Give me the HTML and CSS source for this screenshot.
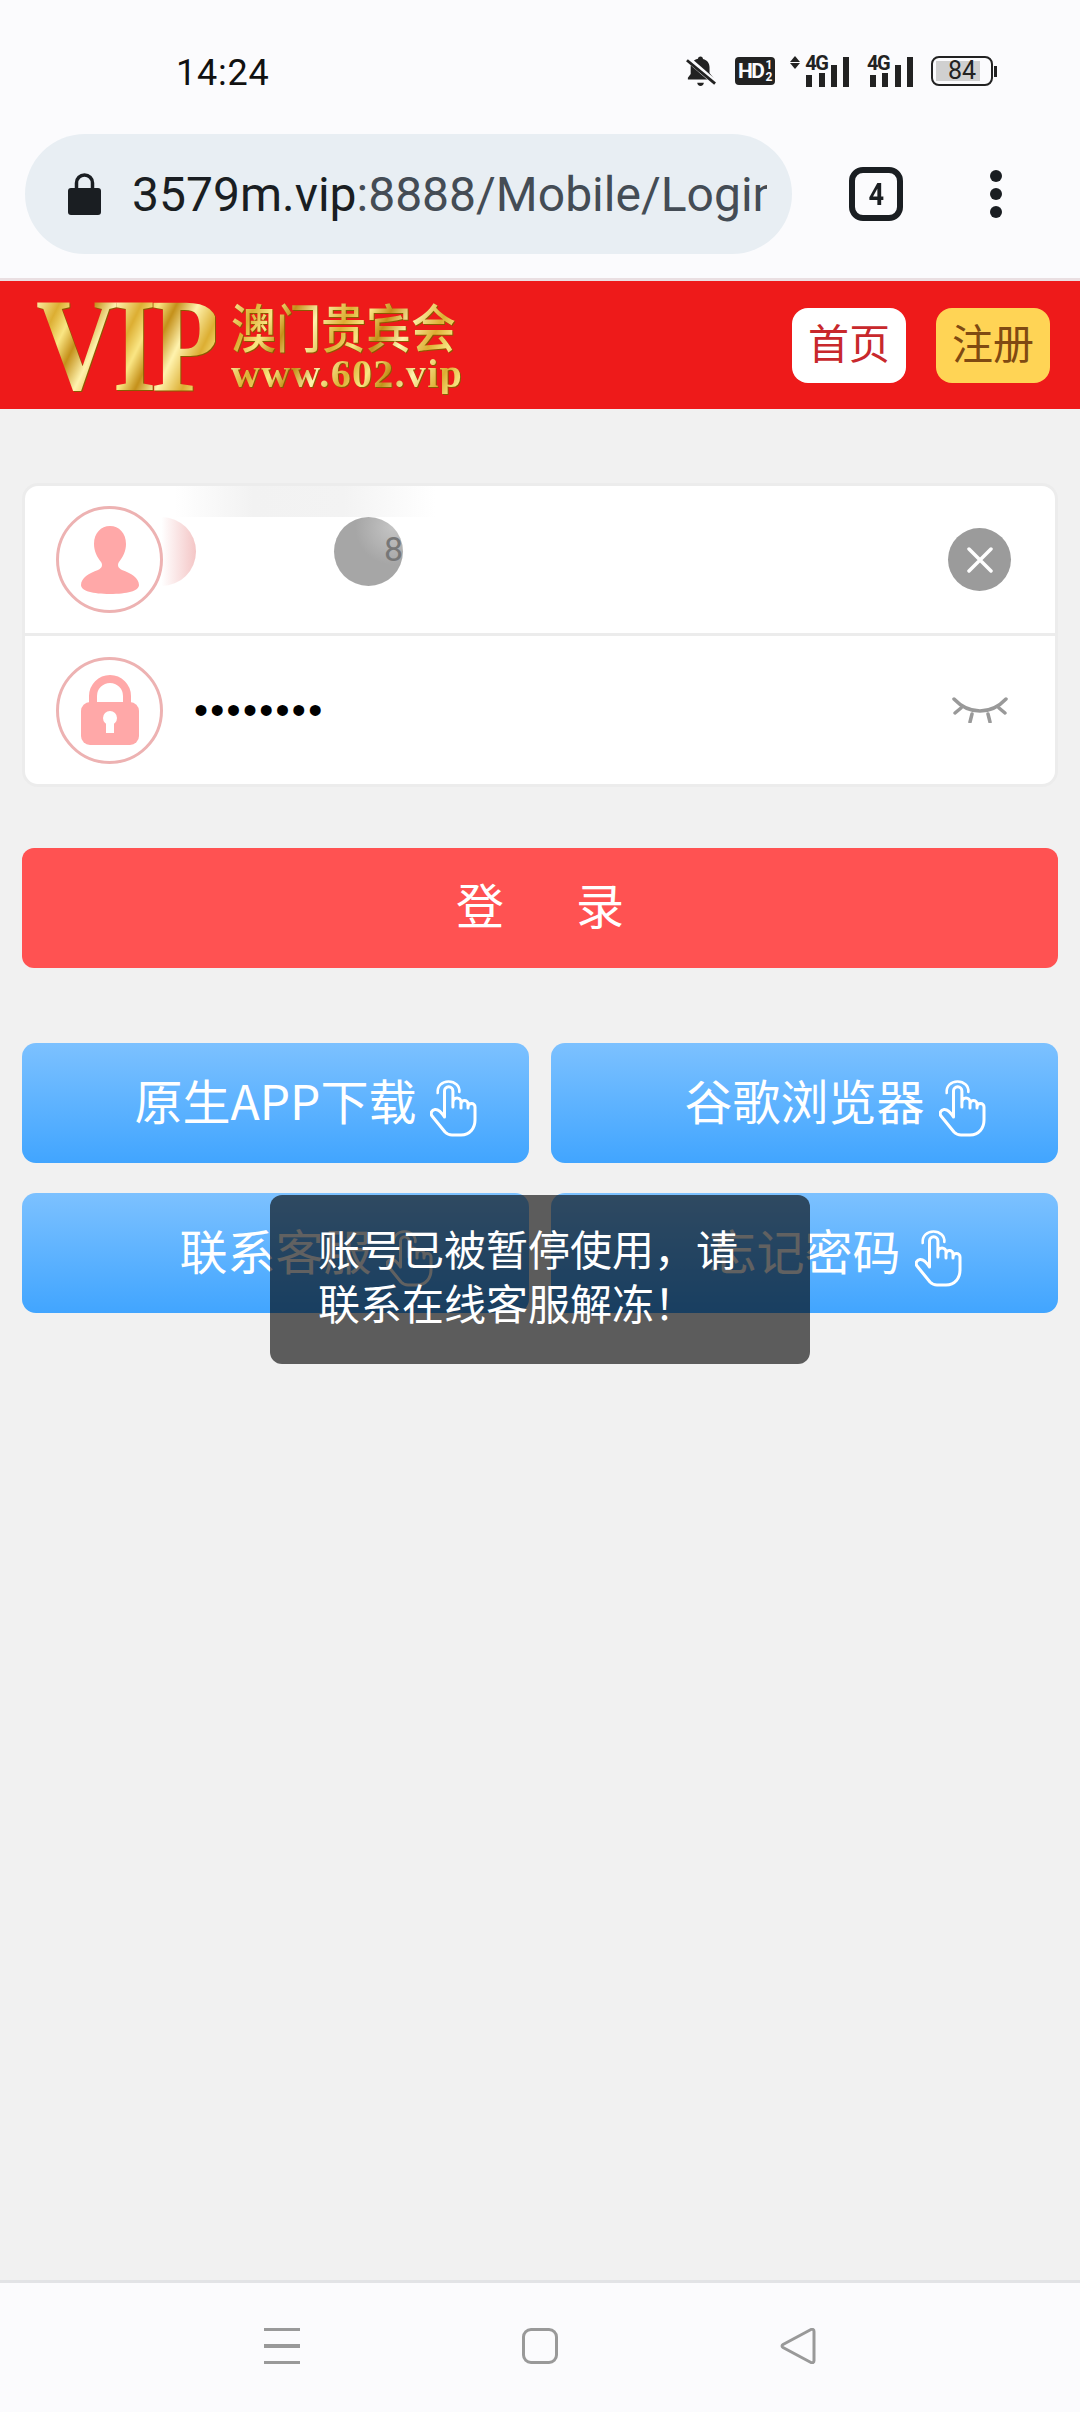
FILE: index.html
```html
<!DOCTYPE html>
<html lang="zh-CN">
<head>
  <meta charset="UTF-8" />
  <title>登录</title>
  <link rel="stylesheet" href="styles.css">
</head>
<body>
  <div class="phone">
    <div class="status-bar">
      <span class="time">14:24</span>
      <div class="status-icons">
        <svg class="ic-bell" width="30" height="33" viewBox="0 0 32 34">
          <path d="M15.500 1c1.600 0 2.600 1 2.600 2.600 4.600 1 7 4.600 7 9v6l4 5v2H2v-2l3-4v-7c0-4.400 2.400-8 7.800-9.200C12.800 2 13.900 1 15.500 1z" fill="#222"/>
          <path d="M12 29h7c0 2-1.500 3.500-3.500 3.500S12 31 12 29z" fill="#222"/>
          <path d="M0 2l31 27" stroke="#fbfbfd" stroke-width="6"/>
          <path d="M1 5l30 25" stroke="#222" stroke-width="3"/>
        </svg>
        <div class="hd-badge"><span class="hd-text">HD</span><span class="hd-nums"><span>1</span><span>2</span></span></div>
        <div class="signal">
          <span class="arrows"><i class="up"></i><i class="down"></i></span>
          <span class="net">4G</span>
          <span class="bars"><i class="b1"></i><i class="b2"></i><i class="b3"></i><i class="b4"></i></span>
        </div>
        <div class="signal signal-plain">
          <span class="net">4G</span>
          <span class="bars"><i class="b1"></i><i class="b2"></i><i class="b3"></i><i class="b4"></i></span>
        </div>
        <div class="battery">
          <div class="battery-body"><div class="battery-level"></div><span class="battery-num">84</span></div>
          <div class="battery-tip"></div>
        </div>
      </div>
    </div>

    <div class="url-bar">
      <div class="url-pill">
        <svg class="url-lock" width="33" height="42" viewBox="0 0 33 42">
          <path d="M8.500 17v-7a8 8 0 0 1 16 0v7" fill="none" stroke="#1a1e22" stroke-width="3.500"/>
          <rect y="15" width="33" height="27" rx="3" fill="#1a1e22"/>
        </svg>
        <div class="url-text"><span class="host">3579m.vip</span>:8888/Mobile/Login</div>
      </div>
      <div class="tab-count"><span>4</span></div>
      <div class="kebab"><i></i><i></i><i></i></div>
    </div>

    <header class="site-header">
      <div class="logo">
        <span class="logo-vip"><span class="logo-vip-text">VIP</span></span>
        <div class="logo-right">
          <span class="logo-cn">澳门贵宾会</span>
          <span class="logo-url">www.602.vip</span>
        </div>
      </div>
      <div class="header-btns">
        <a class="hbtn hbtn-home">首页</a>
        <a class="hbtn hbtn-reg">注册</a>
      </div>
    </header>

    <main class="content">
      <div class="login-card">
        <div class="login-row row-user">
          <div class="row-icon">
            <svg width="58" height="68" viewBox="0 0 58 68">
              <path d="M29 0c9 0 16 7 16 18 0 7-3 13-7 18-2 3-1 6 3 8 9 3 17 8 17 15 0 6-12 9-29 9S0 65 0 59c0-7 8-12 17-15 4-2 5-5 3-8-4-5-7-11-7-18C13 7 20 0 29 0z" fill="#ffa8a8"/>
            </svg>
          </div>
          <span class="clear-btn">
            <svg width="26" height="26" viewBox="0 0 26 26"><path d="M2 2l22 22M24 2L2 24" stroke="#fff" stroke-width="3.500" stroke-linecap="round"/></svg>
          </span>
          <div class="blur-top"></div>
          <div class="blur-pink"></div>
          <div class="blur-grey"><span class="blur-char">8</span></div>
        </div>
        <div class="login-row">
          <div class="row-icon">
            <svg width="58" height="70" viewBox="0 0 58 70">
              <path d="M12 30V21a17 17 0 0 1 34 0v9" fill="none" stroke="#ffa8a8" stroke-width="8"/>
              <rect y="27" width="58" height="43" rx="9" fill="#ffa8a8"/>
              <circle cx="29" cy="43" r="7" fill="#fff"/>
              <rect x="25" y="44" width="8" height="14" fill="#fff"/>
            </svg>
          </div>
          <span class="pass-dots">••••••••</span>
          <svg class="eye" width="56" height="26" viewBox="0 0 56 26">
            <path d="M2 2c15 16 37 16 52 0M9 11l-6 5M20 17l-2 8M36 17l2 8M47 11l6 5" fill="none" stroke="#999" stroke-width="3.500" stroke-linecap="round"/>
          </svg>
        </div>
      </div>

      <a class="login-btn">登&emsp;&ensp;录</a>

      <div class="link-grid">
        <a class="link-btn">原生APP下载<svg class="hand"><use href="#hand"/></svg></a>
        <a class="link-btn">谷歌浏览器<svg class="hand"><use href="#hand"/></svg></a>
        <a class="link-btn">联系客服<svg class="hand"><use href="#hand"/></svg></a>
        <a class="link-btn">忘记密码<svg class="hand"><use href="#hand"/></svg></a>
      </div>

      <div class="toast">账号已被暂停使用，请联系在线客服解冻！</div>
    </main>

    <nav class="nav-bar">
      <div class="nav-menu"><i></i><i></i><i></i></div>
      <div class="nav-home"></div>
      <svg class="nav-back" width="36" height="36" viewBox="0 0 36 36">
        <path d="M3 16.500L31 1.500c1.500-.8 3 .2 3 2v29c0 1.800-1.500 2.800-3 2L3 19.500c-1.300-.8-1.300-2.200 0-3z" fill="none" stroke="#999" stroke-width="3"/>
      </svg>
    </nav>
  </div>

  <svg width="0" height="0" class="defs">
    <symbol id="hand" viewBox="0 0 48 57">
      <path d="M14.500 37V11a4.200 4.200 0 0 1 8.400 0V27M23 22a4 4 0 0 1 8 0v6M31 24a3.500 3.500 0 0 1 7 0v4M38 27a3.500 3.500 0 0 1 7 0V40c0 8-5 15-14 15H22c-3 0-5-1-7-3L2 36c-2-3 0-6 3-6.500 3-.5 6 2 9.500 7.500"
        fill="none" stroke="#fff" stroke-width="3" stroke-linecap="round" stroke-linejoin="round"/>
      <path d="M7.700 13C7 6 12 1.500 18.500 1.500S30 6 29.300 12" fill="none" stroke="#fff" stroke-width="2.600" stroke-linecap="round"/>
    </symbol>
  </svg>
</body>
</html>
```

FILE: styles.css
```css
* {
  box-sizing: border-box;
}

body {
  margin: 0;
  background: #f1f1f1;
  font-family: 'Noto Sans CJK SC', 'Noto Sans', sans-serif;
}

.defs {
  position: absolute;
}

.phone {
  width: 1080px;
  height: 2412px;
  display: flex;
  flex-direction: column;
  overflow: hidden;
}

/* status bar */
.status-bar {
  height: 128px;
  padding: 50px 83px 32px 176px;
  background: #fbfbfd;
  display: flex;
  align-items: center;
  justify-content: space-between;
}

.time {
  font-family: Roboto, sans-serif;
  font-size: 36px;
  color: #111;
  letter-spacing: 0.8px;
}

.status-icons {
  display: flex;
  align-items: center;
  margin-bottom: 4px;
  gap: 18px;
  color: #222;
}

.ic-bell {
  margin-right: 1px;
}

.hd-badge {
  width: 40px;
  height: 28px;
  margin-right: -3px;
  border-radius: 4px;
  background: #222;
  color: #fbfbfd;
  display: flex;
  align-items: center;
  justify-content: center;
  font-family: Roboto, sans-serif;
  font-weight: 700;
}

.hd-text {
  font-size: 21px;
  letter-spacing: -1.5px;
}

.hd-nums {
  display: flex;
  flex-direction: column;
  font-size: 12px;
  line-height: 12px;
  margin-left: 2px;
}

.signal {
  display: flex;
  height: 31px;
  align-items: flex-end;
}

.arrows {
  display: flex;
  flex-direction: column;
  gap: 1px;
  align-self: flex-start;
  margin-right: 5px;
}

.arrows i {
  width: 0;
  height: 0;
  border-left: 5px solid transparent;
  border-right: 5px solid transparent;
}

.arrows .up {
  border-bottom: 6px solid #222;
}

.arrows .down {
  border-top: 6px solid #222;
}

.net {
  align-self: flex-start;
  width: 20px;
  margin-right: -19px;
  font-family: Roboto, sans-serif;
  font-size: 20px;
  font-weight: 700;
  line-height: 15px;
  letter-spacing: -1.5px;
}

.signal-plain .net {
  margin-right: -17px;
}

.bars {
  display: flex;
  align-items: flex-end;
  gap: 6.300px;
}

.bars i {
  display: block;
  width: 6px;
  background: #222;
}

.bars .b1 { height: 12px; }
.bars .b2 { height: 14px; }
.bars .b3 { height: 22px; }
.bars .b4 { height: 30px; }

.battery {
  display: flex;
  align-items: center;
  gap: 1px;
}

.battery-body {
  position: relative;
  width: 62px;
  height: 30px;
  border: 2px solid #222;
  border-radius: 8px;
  padding: 3px;
}

.battery-level {
  width: 44px;
  height: 100%;
  background: #d0d0d0;
}

.battery-num {
  position: absolute;
  inset: 0;
  text-align: center;
  font-family: Roboto, sans-serif;
  font-size: 25px;
  line-height: 26px;
  color: #222;
}

.battery-tip {
  width: 3px;
  height: 11px;
  background: #222;
}

/* browser url bar */
.url-bar {
  height: 150px;
  padding: 6px 0 0 25px;
  background: #fbfbfd;
  display: flex;
  align-items: flex-start;
}

.url-pill {
  width: 767px;
  height: 120px;
  border-radius: 60px;
  background: #e8eef3;
  padding: 0 25px 0 43px;
  display: flex;
  align-items: center;
  gap: 31px;
}

.url-lock {
  flex: none;
}

.url-text {
  min-width: 0;
  font-family: Roboto, sans-serif;
  font-size: 48px;
  color: #444c55;
  white-space: nowrap;
  overflow: hidden;
}

.host {
  color: #1a1e22;
}

.tab-count {
  width: 54px;
  height: 54px;
  margin: 33px 0 0 57px;
  border: 6px solid #1a1e22;
  border-radius: 14px;
  display: flex;
  align-items: center;
  justify-content: center;
  font-family: Roboto, sans-serif;
  font-size: 32px;
  font-weight: 700;
  color: #1a1e22;
}

.tab-count span {
  transform: scaleX(0.85);
}

.kebab {
  margin: 36px 0 0 87px;
  display: flex;
  flex-direction: column;
  gap: 6px;
}

.kebab i {
  display: block;
  width: 12px;
  height: 12px;
  border-radius: 50%;
  background: #1a1e22;
}

/* site header */
.site-header {
  height: 131px;
  padding: 0 30px 0 36px;
  border-top: 3px solid #eadfe2;
  background: #ee1a1a;
  display: flex;
  align-items: center;
  justify-content: space-between;
}

.logo {
  display: flex;
  align-items: center;
  gap: 12px;
}

.logo-vip {
  display: block;
  width: 183px;
  height: 92px;
  filter: drop-shadow(1px 1px 0 #8a5a00);
}

.logo-vip-text,
.logo-cn,
.logo-url {
  background: repeating-linear-gradient(120deg, #fff3ae 0, #dcae32 26px, #fae684 44px, #c4901a 62px, #fff3ae 84px);
  -webkit-background-clip: text;
  background-clip: text;
  color: transparent;
}

.logo-vip-text {
  display: inline-block;
  font-family: 'Liberation Serif', serif;
  font-size: 133px;
  font-weight: 700;
  line-height: 92px;
  letter-spacing: -6px;
  transform: scaleX(0.85);
  transform-origin: left;
}

.logo-right {
  display: flex;
  flex-direction: column;
  margin-top: 2px;
  filter: drop-shadow(1px 1px 0 #8a5a00);
}

.logo-cn {
  display: block;
  font-size: 45px;
  line-height: 56px;
  font-weight: 500;
  transform: scaleY(1.15);
}

.logo-url {
  font-family: 'Liberation Serif', serif;
  font-size: 40px;
  font-weight: 700;
  line-height: 40px;
  letter-spacing: 1.300px;
}

.header-btns {
  display: flex;
  gap: 30px;
}

.hbtn {
  width: 114px;
  height: 75px;
  padding-bottom: 9px;
  border-radius: 16px;
  font-size: 41px;
  display: flex;
  align-items: center;
  justify-content: center;
}

.hbtn-home {
  background: #fff;
  color: #c8282c;
}

.hbtn-reg {
  background: #ffd455;
  color: #7f4a12;
}

/* form */
.content {
  position: relative;
  flex: 1;
  padding: 74px 22px 0;
}

.login-card {
  border: 3px solid #ececec;
  border-radius: 16px;
  background: #fff;
}

.login-row {
  position: relative;
  height: 148px;
  padding: 0 29px 0 31px;
  display: flex;
  align-items: center;
  justify-content: space-between;
}

.row-user {
  height: 150px;
  border-bottom: 3px solid #ececec;
}

.row-icon {
  position: relative;
  z-index: 1;
  width: 107px;
  height: 107px;
  border: 3px solid #edb2b2;
  border-radius: 50%;
  background: #fff;
  display: flex;
  align-items: center;
  justify-content: center;
  flex: none;
}

.clear-btn {
  width: 63px;
  height: 63px;
  margin-right: 15px;
  border-radius: 50%;
  background: #9b9b9b;
  display: flex;
  align-items: center;
  justify-content: center;
}

.pass-dots {
  flex: 1;
  margin-left: 31px;
  font-family: 'Liberation Sans', sans-serif;
  font-size: 40px;
  line-height: 40px;
  letter-spacing: 2.300px;
  color: #000;
}

.eye {
  margin-right: 18px;
}

/* smudge over the account name */
.blur-top {
  position: absolute;
  left: 150px;
  top: 0;
  width: 260px;
  height: 31px;
  background: linear-gradient(90deg, #fff, #f2f2f2 30%, #f3f3f3 65%, #fff);
}

.blur-pink {
  position: absolute;
  left: 102px;
  top: 31px;
  width: 69px;
  height: 69px;
  border-radius: 50%;
  background: linear-gradient(90deg, #fff 50%, #f4c6c6 100%);
}

.blur-grey {
  position: absolute;
  left: 309px;
  top: 31px;
  width: 69px;
  height: 69px;
  border-radius: 50%;
  background: radial-gradient(circle at 85% 15%, #c4c4c4, #a6a6a6 45%);
}

.blur-char {
  position: absolute;
  right: 0;
  top: 12px;
  font-family: Roboto, sans-serif;
  font-size: 34px;
  line-height: 40px;
  color: #777;
}

.login-btn {
  height: 120px;
  margin-top: 61px;
  padding-bottom: 10px;
  border-radius: 12px;
  background: #ff5252;
  color: #fff;
  font-size: 48px;
  display: flex;
  align-items: center;
  justify-content: center;
}

.link-grid {
  margin-top: 75px;
  display: grid;
  grid-template-columns: 507px 507px;
  gap: 30px 22px;
}

.link-btn {
  height: 120px;
  padding: 0 0 8px 62px;
  border-radius: 14px;
  background: linear-gradient(#7cc1ff, #41a5ff);
  color: #fff;
  font-size: 48px;
  display: flex;
  align-items: center;
  justify-content: center;
  gap: 14px;
}

.hand {
  width: 48px;
  height: 57px;
  margin-top: 19px;
  flex: none;
}

.toast {
  position: absolute;
  left: 270px;
  top: 786px;
  width: 540px;
  height: 169px;
  padding: 26px 48px 0;
  border-radius: 12px;
  background: rgba(0, 0, 0, 0.62);
  color: #fff;
  font-size: 42px;
  line-height: 54px;
}

/* android nav */
.nav-bar {
  height: 132px;
  border-top: 3px solid #e2e3e6;
  background: #fbfbfd;
  padding-bottom: 3px;
  display: flex;
  align-items: center;
}

.nav-menu {
  margin-left: 264px;
  width: 36px;
  display: flex;
  flex-direction: column;
  gap: 13px;
}

.nav-menu i {
  display: block;
  height: 3.500px;
  background: #999;
}

.nav-home {
  width: 36px;
  height: 36px;
  margin-left: 222px;
  border: 3px solid #999;
  border-radius: 9px;
}

.nav-back {
  margin-left: 222px;
}
```
